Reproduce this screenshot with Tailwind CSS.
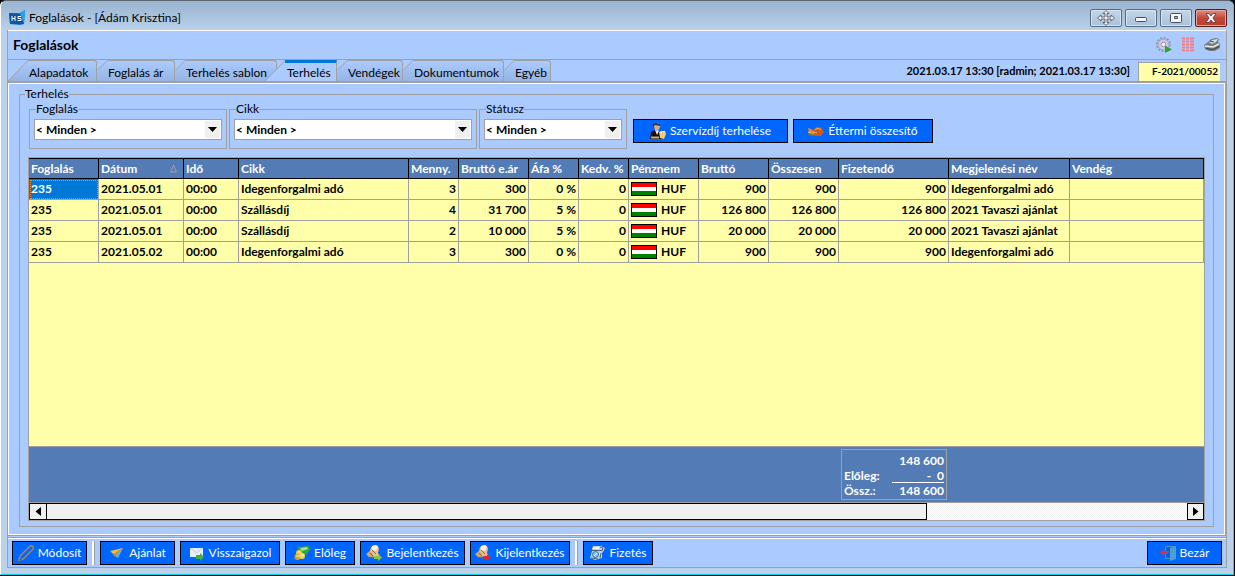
<!DOCTYPE html>
<html lang="hu">
<head>
<meta charset="utf-8">
<title>Foglalások - [Ádám Krisztina]</title>
<script src="https://cdn.jsdelivr.net/npm/@tailwindcss/browser@4"></script>
</head>
<body class="min-h-screen flex flex-col bg-black text-black text-xs leading-4 font-['Lato','Noto_Sans',sans-serif]">
<svg width="0" height="0" class="absolute" aria-hidden="true">
  <defs>
    <linearGradient id="tabfill" x1="0" y1="0" x2="0" y2="1"><stop offset="0" stop-color="#abcbff"/><stop offset="1" stop-color="#96b4e4"/></linearGradient>
    <symbol id="slant" viewBox="0 0 10 21"><path d="M0 10.500 10 .5V21H0z" fill="url(#tabfill)"/><path d="M0 10.500 10 .5" stroke="#a0a0a0" fill="none"/></symbol>
    <symbol id="flag" viewBox="0 0 26 14"><path fill="#000" d="M0 0h26v14H0z"/><path fill="#f00" d="M1 1h24v4H1z"/><path fill="#fff" d="M1 5h24v4H1z"/><path fill="#008000" d="M1 9h24v4H1z"/></symbol>
    <symbol id="bell" viewBox="0 0 16 16"><path d="M1 10 4 6l1-4 4-2 3 1 1 3-1 4 2 3-6 1z" fill="#e8c08a"/><path d="M6 1l4-1 2 2-2 4-4-1z" fill="#fff1d8"/><path d="M0 9l4-3 4 4-4 3z" fill="#d9a565"/><path d="M4 8l3 3m-1-6 4 4" stroke="#8b6a45"/><path d="M2 12.500h7" stroke="#776650"/></symbol>
  </defs>
</svg>
<div class="flex-1 flex flex-col mr-px mb-px rounded-t-md border-l border-l-white border-b border-b-[#18c8dc] border-r border-r-[#30cfe0] border-t border-t-[#5d6670] bg-[#bad1ea] px-1.5 pb-1.5">
  <header class="h-[29px] -mx-1.5 pl-2 pr-1.5 pt-1 flex items-center rounded-t-md bg-linear-to-b from-[#99b4d0] to-[#b9d1ea]">
    <svg class="w-4 h-4 mr-1" viewBox="0 0 16 16" aria-hidden="true"><path d="M0 3 11 3 16 0 15 14 11 15 1 14z" fill="#1473c8"/><path d="M11 3 16 0 15 14z" fill="#25a5e8"/><path d="M0 3 11 4 15 14 1 14z" fill="#0c57a5"/><path d="M3 6v5M6 6v5M3 8.500h3M12 6.500H9v2h3v2H8.500" stroke="#fff" fill="none"/></svg>
    <h1 class="flex-1">Foglalások - [Ádám Krisztina]</h1>
    <div class="flex gap-[3px]">
      <button aria-label="Mozgatás" class="w-8 h-[18px] flex items-center justify-center rounded-xs border border-[#566b82] shadow-[inset_0_0_0_1px_#d8e5f2] bg-linear-to-b from-[#c4d6e8] to-[#a9c1da]"><svg class="w-[18px] h-4" viewBox="0 0 18 16"><path d="M9 .5 12 3.500h-2V7h4V5l3.500 3-3.500 3V9h-4v3.500h2L9 15.500l-3-3h2V9H4v2L.5 8 4 5v2h4V3.500H6z" fill="#f4f4f4" stroke="#555b66" stroke-width=".9"/></svg></button>
      <button aria-label="Kis méret" class="w-8 h-[18px] flex items-center justify-center rounded-xs border border-[#566b82] shadow-[inset_0_0_0_1px_#d8e5f2] bg-linear-to-b from-[#c4d6e8] to-[#a9c1da]"><svg class="w-3 h-3" viewBox="0 0 12 12"><rect x=".5" y="5.500" width="11" height="4" rx="1" fill="#f5f5f5" stroke="#4a4f60"/></svg></button>
      <button aria-label="Teljes méret" class="w-8 h-[18px] flex items-center justify-center rounded-xs border border-[#566b82] shadow-[inset_0_0_0_1px_#d8e5f2] bg-linear-to-b from-[#c4d6e8] to-[#a9c1da]"><svg class="w-3 h-3" viewBox="0 0 12 12"><rect x=".5" y="1.500" width="11" height="9" rx="1" fill="#f5f5f5" stroke="#4a4f60"/><path d="M4.500 4.500h3v2h-3z" fill="#a9c1da" stroke="#4a4f60"/></svg></button>
      <button aria-label="Bezárás" class="w-8 h-[18px] flex items-center justify-center rounded-xs border border-[#5c1a1a] shadow-[inset_0_0_0_1px_#e2a79d] bg-linear-to-b from-[#dc8f84] via-[#c4453a] to-[#b5402c]"><svg class="w-3 h-3" viewBox="0 0 12 12"><path d="M1 1.500h3l2 2.500 2-2.500h3L8 6l3 4.500H8L6 8l-2 2.500H1L4 6z" fill="#f8f8f8" stroke="#57303a" stroke-width=".8"/></svg></button>
    </div>
  </header>

  <main class="flex-1 flex flex-col bg-[#abcbff] border-x border-b border-[#a0a0a0]">
    <div class="h-[30px] border-t border-white border-b border-b-[#a0a0a0] pl-[5px] pr-1.5 flex items-center">
      <h2 class="flex-1 font-bold text-[14px]">Foglalások</h2>
      <div class="flex gap-2">
        <button aria-label="Beállítás"><svg class="w-4 h-4 block" viewBox="0 0 16 16"><circle cx="7.500" cy="7.500" r="6.600" fill="none" stroke="#8f93b0" stroke-width="1.800" stroke-dasharray="2 1.450"/><circle cx="7.500" cy="7.500" r="5.300" fill="#c9cce0" stroke="#a4a8c4"/><circle cx="7.500" cy="7.500" r="2.300" fill="#eef" stroke="#a98bb0"/><path d="M9 8.500l7 4L9 16z" fill="#2fa52f"/></svg></button>
        <button aria-label="Lista"><svg class="w-4 h-4 block" viewBox="0 0 16 16"><path d="M2 1.500h3m1 0h3m1 0h4M2 4.500h3m1 0h3m1 0h4M2 7.500h3m1 0h3m1 0h4M2 10.500h3m1 0h3m1 0h4M2 13.500h3m1 0h3m1 0h4" stroke="#f47c86" stroke-width="2"/></svg></button>
        <button aria-label="Nyomtatás"><svg class="w-4 h-4 block" viewBox="0 0 16 16"><path d="M0 8 4 5l3-3 5-1 3 1-1 3 2 2v4l-5 3H5L1 12z" fill="#777e80"/><path d="M5 5l3-2 6-1-2 3-4 2z" fill="#d8dede"/><path d="M1 9l8 1 6-3" stroke="#e9eeee" stroke-width="1.500" fill="none"/><path d="M2 11.500l7 1 6-3M6 4l4 1" stroke="#3d4444" fill="none"/></svg></button>
      </div>
    </div>

    <div class="h-[21px] flex items-stretch pr-1.5">
      <nav class="flex-1 flex" role="tablist">
        <button role="tab" class="flex"><svg class="w-5 h-[21px]" viewBox="0 0 20 21"><path d="M0 21 20 .5V21z" fill="url(#tabfill)"/><path d="M0 21 20 .5" stroke="#a0a0a0" fill="none"/></svg><span class="w-[69px] h-[21px] pl-px pt-1 text-left whitespace-nowrap border-t border-r border-[#a0a0a0] rounded-tr-[3px] bg-linear-to-b from-[#abcbff] to-[#96b4e4]">Alapadatok</span></button>
        <button role="tab" class="flex"><svg class="w-2.5 h-[21px]"><use href="#slant"/></svg><span class="w-[68px] h-[21px] pl-px pt-1 text-left whitespace-nowrap border-t border-r border-[#a0a0a0] rounded-tr-[3px] bg-linear-to-b from-[#abcbff] to-[#96b4e4]">Foglalás ár</span></button>
        <button role="tab" class="flex"><svg class="w-2.5 h-[21px]"><use href="#slant"/></svg><span class="w-[92px] h-[21px] pl-px pt-1 text-left whitespace-nowrap border-t border-r border-[#a0a0a0] rounded-tr-[3px] bg-linear-to-b from-[#abcbff] to-[#96b4e4]">Terhelés sablon</span></button>
        <button role="tab" aria-selected="true" class="flex relative -ml-3"><svg class="w-5 h-[21px]" viewBox="0 0 20 21"><path d="M0 21 20 .5V21z" fill="#abcbff"/><path d="M0 21 20 .5" stroke="#a0a0a0" fill="none"/></svg><span class="w-[52px] h-[21px] pl-0.5 pt-0.5 text-left whitespace-nowrap border-t-3 border-t-[#0078d7] border-r border-r-[#a0a0a0] bg-[#abcbff]">Terhelés</span></button>
        <button role="tab" class="flex"><svg class="w-2.5 h-[21px]"><use href="#slant"/></svg><span class="w-14 h-[21px] pl-px pt-1 text-left whitespace-nowrap border-t border-r border-[#a0a0a0] rounded-tr-[3px] bg-linear-to-b from-[#abcbff] to-[#96b4e4]">Vendégek</span></button>
        <button role="tab" class="flex"><svg class="w-2.5 h-[21px]"><use href="#slant"/></svg><span class="w-[91px] h-[21px] pl-px pt-1 text-left whitespace-nowrap border-t border-r border-[#a0a0a0] rounded-tr-[3px] bg-linear-to-b from-[#abcbff] to-[#96b4e4]">Dokumentumok</span></button>
        <button role="tab" class="flex"><svg class="w-2.5 h-[21px]"><use href="#slant"/></svg><span class="w-[37px] h-[21px] pl-px pt-1 text-left whitespace-nowrap border-t border-r border-[#a0a0a0] rounded-tr-[3px] bg-linear-to-b from-[#abcbff] to-[#96b4e4]">Egyéb</span></button>
      </nav>
      <p class="pt-[3px] pr-2 text-[11px] leading-4 font-bold">2021.03.17 13:30 [radmin; 2021.03.17 13:30]</p>
      <p class="mt-0.5 w-[82px] pr-0.5 text-right text-[10px] leading-4 font-bold bg-[#ffffaa] border-l border-t border-[#a0a0a0]">F-2021/00052</p>
    </div>

    <section class="flex-1 flex flex-col border-t-2 border-r border-b border-[#a0a0a0]">
      <div class="flex-1 flex flex-col border border-white px-[10px] pt-[3px] pb-[7px]">
        <fieldset class="flex-1 border border-[#a0a0a0] px-2 min-w-0">
          <legend class="ml-[-3px] h-3.5 leading-[14px]">Terhelés</legend>
          <div class="flex items-start gap-0.5 mt-px">
            <fieldset class="w-[198px] ml-px border border-[#a0a0a0] pt-[3px] px-1 pb-2">
              <legend class="ml-0.5 h-3.5 leading-[14px]"><label for="f1">Foglalás</label></legend>
              <div class="relative"><select id="f1" class="block w-full h-[21px] appearance-none bg-white border border-[#a0a0a0] pl-px text-xs font-bold"><option>&lt; Minden &gt;</option></select><svg class="absolute right-0.5 top-0.5 w-[15px] h-[17px] pointer-events-none" viewBox="0 0 15 17"><path d="M0 0h15v17H0z" fill="#f0f0f0"/><path d="M3 6h9L7.500 11z"/></svg></div>
            </fieldset>
            <fieldset class="w-[248px] border border-[#a0a0a0] pt-[3px] px-1 pb-2">
              <legend class="ml-0.5 h-3.5 leading-[14px]"><label for="f2">Cikk</label></legend>
              <div class="relative"><select id="f2" class="block w-full h-[21px] appearance-none bg-white border border-[#a0a0a0] pl-px text-xs font-bold"><option>&lt; Minden &gt;</option></select><svg class="absolute right-0.5 top-0.5 w-[15px] h-[17px] pointer-events-none" viewBox="0 0 15 17"><path d="M0 0h15v17H0z" fill="#f0f0f0"/><path d="M3 6h9L7.500 11z"/></svg></div>
            </fieldset>
            <fieldset class="w-[148px] border border-[#a0a0a0] pt-[3px] px-1 pb-2">
              <legend class="ml-0.5 h-3.5 leading-[14px]"><label for="f3">Státusz</label></legend>
              <div class="relative"><select id="f3" class="block w-full h-[21px] appearance-none bg-white border border-[#a0a0a0] pl-px text-xs font-bold"><option>&lt; Minden &gt;</option></select><svg class="absolute right-0.5 top-0.5 w-[15px] h-[17px] pointer-events-none" viewBox="0 0 15 17"><path d="M0 0h15v17H0z" fill="#f0f0f0"/><path d="M3 6h9L7.500 11z"/></svg></div>
            </fieldset>
            <div class="flex gap-[5px] mt-[17px] ml-1">
              <button class="w-[155px] h-6 flex items-center justify-center gap-1 border border-black bg-[#0066ff] text-white"><svg class="w-4 h-4" viewBox="0 0 16 16"><path d="M0 16 1 9l4-2 5 2 2 7z" fill="#111"/><path d="M4 3q0-3 3-3 4 0 3 4L8 8 5 7z" fill="#d9ad8b"/><path d="M3 4V1l3-1 4 1v2L5 2z" fill="#3a3028"/><path d="M5 7l2 5 2-4z" fill="#eee"/><path d="M9 9l6-1 1 3-2 5-4-1z" fill="#f1cd72"/><path d="M10 9l5-.5" stroke="#fff"/><path d="M1 14.500h8" stroke="#d8a878" stroke-width="2"/></svg>Szervízdíj terhelése</button>
              <button class="w-[140px] h-6 flex items-center justify-center gap-1 border border-black bg-[#0066ff] text-white"><svg class="w-4 h-4" viewBox="0 0 16 16"><path d="M3 10 1 6l4 1 3-3q6-1 8 5l-2 3H5z" fill="#c9591c"/><path d="M0 5l3 1 4 3-2 3-4-3z" fill="#e8872f"/><path d="M7 6.500q3-2 6 0M5 9l4 1" stroke="#f6ae62" fill="none"/><path d="M0 11l4 1 9 .5" stroke="#7a8a2b" fill="none"/><path d="M0 9l3 1" stroke="#f2d59a"/></svg>Éttermi összesítő</button>
            </div>
          </div>

          <div class="mt-2 border border-[#a0a0a0] bg-[#ffffaa]">
            <table class="w-full table-fixed border-separate border-spacing-0 text-xs font-bold whitespace-nowrap [&_th]:h-[21px] [&_th]:p-0 [&_th]:pl-0.5 [&_th]:text-left [&_th]:text-white [&_th]:bg-[#537bb5] [&_th]:border-y [&_th]:border-r [&_th]:border-black [&_td]:h-[21px] [&_td]:p-0 [&_td]:px-0.5 [&_td]:border-b [&_td]:border-r [&_td]:border-[#a0a0a0]">
              <colgroup><col class="w-[70px]"><col class="w-[85px]"><col class="w-[55px]"><col class="w-[170px]"><col class="w-[50px]"><col class="w-[70px]"><col class="w-[50px]"><col class="w-[50px]"><col class="w-[70px]"><col class="w-[70px]"><col class="w-[70px]"><col class="w-[110px]"><col class="w-[121px]"><col></colgroup>
              <thead><tr><th>Foglalás</th><th><span class="flex items-center justify-between pr-1.5">Dátum<svg class="w-[7px] h-[9px]" viewBox="0 0 7 9"><path d="M.5 8 3.500 1 6.500 8z" fill="none" stroke="#a0a0a0"/></svg></span></th><th>Idő</th><th>Cikk</th><th>Menny.</th><th>Bruttó e.ár</th><th>Áfa %</th><th>Kedv. %</th><th>Pénznem</th><th>Bruttó</th><th>Összesen</th><th>Fizetendő</th><th>Megjelenési név</th><th>Vendég</th></tr></thead>
              <tbody>
                <tr><td class="bg-[#0078d7] text-white outline-1 outline-dotted -outline-offset-2 outline-[#ff8728]">235</td><td>2021.05.01</td><td>00:00</td><td>Idegenforgalmi adó</td><td class="text-right">3</td><td class="text-right">300</td><td class="text-right">0 %</td><td class="text-right">0</td><td><span class="flex items-center gap-1"><svg class="w-[26px] h-3.5"><use href="#flag"/></svg>HUF</span></td><td class="text-right">900</td><td class="text-right">900</td><td class="text-right">900</td><td>Idegenforgalmi adó</td><td></td></tr>
                <tr><td>235</td><td>2021.05.01</td><td>00:00</td><td>Szállásdíj</td><td class="text-right">4</td><td class="text-right">31 700</td><td class="text-right">5 %</td><td class="text-right">0</td><td><span class="flex items-center gap-1"><svg class="w-[26px] h-3.5"><use href="#flag"/></svg>HUF</span></td><td class="text-right">126 800</td><td class="text-right">126 800</td><td class="text-right">126 800</td><td>2021 Tavaszi ajánlat</td><td></td></tr>
                <tr><td>235</td><td>2021.05.01</td><td>00:00</td><td>Szállásdíj</td><td class="text-right">2</td><td class="text-right">10 000</td><td class="text-right">5 %</td><td class="text-right">0</td><td><span class="flex items-center gap-1"><svg class="w-[26px] h-3.5"><use href="#flag"/></svg>HUF</span></td><td class="text-right">20 000</td><td class="text-right">20 000</td><td class="text-right">20 000</td><td>2021 Tavaszi ajánlat</td><td></td></tr>
                <tr><td>235</td><td>2021.05.02</td><td>00:00</td><td>Idegenforgalmi adó</td><td class="text-right">3</td><td class="text-right">300</td><td class="text-right">0 %</td><td class="text-right">0</td><td><span class="flex items-center gap-1"><svg class="w-[26px] h-3.5"><use href="#flag"/></svg>HUF</span></td><td class="text-right">900</td><td class="text-right">900</td><td class="text-right">900</td><td>Idegenforgalmi adó</td><td></td></tr>
              </tbody>
            </table>
            <div class="h-[calc(100vh-393px)]"></div>
            <div class="h-[57px] border-y border-[#a0a0a0] bg-[#537bb5] text-white text-xs font-bold pl-[812px] pt-0.5">
              <dl class="w-[106px] h-[51px] border border-[#a0a0a0] pt-[3px] px-0.5 leading-[15px] grid grid-cols-[48px_1fr] auto-rows-[15px]">
                <dt></dt><dd class="text-right">148 600</dd>
                <dt>Előleg:</dt><dd class="text-right whitespace-pre border-b border-white">-  0</dd>
                <dt>Össz.:</dt><dd class="text-right">148 600</dd>
              </dl>
            </div>
            <div class="h-[17px] flex bg-[repeating-conic-gradient(#fff_0_25%,#f0f0f0_0_50%)] bg-[length:2px_2px]">
              <button aria-label="Balra" class="w-[18px] border border-black bg-[#f0f0f0] flex items-center justify-center"><svg class="w-1.5 h-[9px]" viewBox="0 0 6 9"><path d="M6 0v9L.5 4.500z"/></svg></button>
              <div class="w-[75%] -ml-px border border-black bg-[#f0f0f0]"></div>
              <div class="flex-1"></div>
              <button aria-label="Jobbra" class="w-[17px] border border-black bg-[#f0f0f0] flex items-center justify-center"><svg class="w-1.5 h-[9px]" viewBox="0 0 6 9"><path d="M0 0v9l5.500-4.500z"/></svg></button>
            </div>
          </div>
        </fieldset>
      </div>
    </section>

    <footer class="mt-px border-t border-[#a0a0a0]">
      <div class="border-t border-white pl-1 pr-1 pt-0.5 pb-0.5 flex gap-[5px] text-white">
        <button class="w-[75px] h-6 flex items-center justify-center gap-1 border border-black bg-[#0066ff]"><svg class="w-4 h-4" viewBox="0 0 16 16"><path d="M1 15 2 11 12 1q2-1 3 1t-1 3L5 14z" fill="none" stroke="#b8863a" stroke-width="1.400"/><path d="M3 12 13 2M1 15l3-1" stroke="#7c5a2c" fill="none"/></svg>Módosít</button>
        <div class="w-[3px] bg-white border-r border-[#a0a0a0]"></div>
        <button class="w-[75px] h-6 flex items-center justify-center gap-1 border border-black bg-[#0066ff]"><svg class="w-4 h-4" viewBox="0 0 16 16"><path d="M2 7 14 3 9 13 6 11z" fill="#5fb4e6"/><path d="M1 6 14 3 5 9z" fill="#f3b93a"/><path d="M5 12V9l9-6-8 8z" fill="#c88a22"/></svg>Ajánlat</button>
        <button class="w-[100px] h-6 flex items-center justify-center gap-1 border border-black bg-[#0066ff]"><svg class="w-4 h-4" viewBox="0 0 16 16"><path d="M1 3h13v9H1z" fill="#e6eef8"/><path d="M1 3l6.500 5L14 3" fill="none" stroke="#c4d4e6"/><path d="M7 10h4V8l4 4-4 4v-2H7z" fill="#3fae3a"/></svg>Visszaigazol</button>
        <button class="w-[70px] h-6 flex items-center justify-center gap-1 border border-black bg-[#0066ff]"><svg class="w-4 h-4" viewBox="0 0 16 16"><path d="M4 2l11-1 1 4-4 5-8-2z" fill="#35a534"/><path d="M6 3l7-1 1 2-6 2z" fill="#a4e191"/><circle cx="5" cy="8" r="3" fill="#ecc63c"/><circle cx="3.500" cy="12" r="3" fill="#d6a31c"/><circle cx="8" cy="11" r="3" fill="#f4d458"/><path d="M2 11h3m2-1h3M4 7h3" stroke="#fff2a0"/></svg>Előleg</button>
        <button class="w-[105px] h-6 flex items-center justify-center gap-1 border border-black bg-[#0066ff]"><svg class="w-4 h-4" viewBox="0 0 16 16"><use href="#bell"/><path d="M8 11h4V9l4 3.500L12 16v-2H8z" fill="#8bc53f"/></svg>Bejelentkezés</button>
        <button class="w-[100px] h-6 flex items-center justify-center gap-1 border border-black bg-[#0066ff]"><svg class="w-4 h-4" viewBox="0 0 16 16"><use href="#bell"/><path d="M8 11h4V9l4 3.500L12 16v-2H8z" fill="#e82424"/></svg>Kijelentkezés</button>
        <div class="w-[3px] bg-white border-r border-[#a0a0a0]"></div>
        <button class="w-[70px] h-6 flex items-center justify-center gap-1 border border-black bg-[#0066ff]"><svg class="w-4 h-4" viewBox="0 0 16 16"><path d="M4 1h8l4 2-2 4-1 1v5l-7 2-5-2 2-7z" fill="#c4d3df"/><path d="M4 2h6v2H3z" fill="#eef4f8"/><path d="M11 2l3 1-1 3M3 5.500h10M2 13l7 1M12 8l-1 5" stroke="#4e6375" fill="none"/><circle cx="6.500" cy="9.500" r="3" fill="#8dc6ea" stroke="#2e77ae"/><path d="M5 11l3-3" stroke="#fff"/></svg>Fizetés</button>
        <div class="flex-1"></div>
        <button class="w-[75px] h-6 flex items-center justify-center gap-1 border border-black bg-[#0066ff]"><svg class="w-4 h-4" viewBox="0 0 16 16"><path d="M5.500 1.500h9v12h-9z" fill="#0a62d8" stroke="#4d92c8"/><path d="M10 3l6-2v13l-6 2z" fill="#4e9fd0"/><path d="M0 7.500 4 4v2h4v3H4v2z" fill="#d8304c"/></svg>Bezár</button>
      </div>
    </footer>
  </main>
</div>
</body>
</html>
